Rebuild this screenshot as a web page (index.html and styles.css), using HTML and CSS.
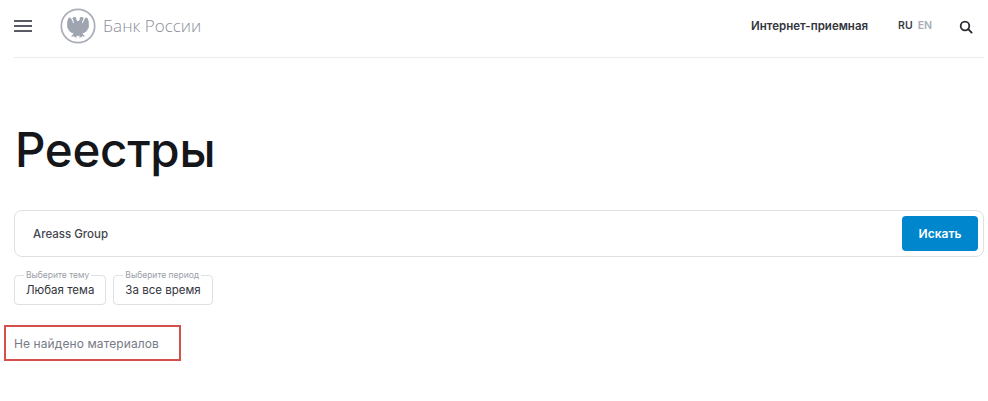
FILE: index.html
```html
<!DOCTYPE html>
<html lang="ru">
<head>
<meta charset="utf-8">
<title>Реестры</title>
<link rel="stylesheet" href="styles.css">
</head>
<body>
<div class="page">
  <header class="header">
    <div class="brand">
      <div class="burger"><span></span><span></span><span></span></div>
      <svg class="emblem" viewBox="0 0 36 36" width="36" height="36" aria-hidden="true">
        <circle cx="18" cy="18" r="16.7" fill="none" stroke="#a9aeb9" stroke-width="1.7"/>
        <g fill="#9fa4b1">
          <path d="M17.4 12.5l-1.2-.8.2-1.6-1.2-1.2-1.6.1-.9 1.2-1.3.5 1.5.3.3 1.6.8 1.6-.7 1.3-1.2-3.2-1.6-2.6-1.3-.2-.9 1-1 2.7-.2 3.4.2 3.7 1 .3.1 1.6 1 .2.5 1.5 1 .1.8 1.1 1.3-.1.4-1-.4 2.2-1.9 2.4 1.2.2 1.4-1 .3 1.5 1.3-.5.9 1.7.5-2.9-.2-3-.3-1.4v-10z"/>
          <path d="M18.6 12.5l1.2-.8-.2-1.6 1.2-1.2 1.6.1.9 1.2 1.3.5-1.5.3-.3 1.6-.8 1.6.7 1.3 1.2-3.2 1.6-2.6 1.3-.2.9 1 1 2.7.2 3.4-.2 3.7-1 .3-.1 1.6-1 .2-.5 1.5-1 .1-.8 1.1-1.3-.1-.4-1 .4 2.2 1.9 2.4-1.2.2-1.4-1-.3 1.5-1.3-.5-.9 1.7-.5-2.9.2-3 .3-1.4v-10z"/>
          <path d="M14.2 13h7.6l.6 5.5-1.2 6-2.1 3.6h-2.2l-2.1-3.6-1.2-6z"/>
        </g>
      </svg>
      <span class="bank-name">Банк России</span>
    </div>
    <nav class="tools">
      <span class="reception">Интернет-приемная</span>
      <span class="langs"><b class="lang-on">RU</b><span class="lang-off">EN</span></span>
      <svg class="search-icon" viewBox="0 0 14 14" width="14" height="14" aria-hidden="true">
        <circle cx="6" cy="6" r="4.3" fill="none" stroke="#2a2c33" stroke-width="1.8"/>
        <path d="M9.2 9.2L12.6 12.6" stroke="#2a2c33" stroke-width="1.9" stroke-linecap="round"/>
      </svg>
    </nav>
  </header>

  <h1 class="title">Реестры</h1>

  <form class="search">
    <span class="query">Areass Group</span>
    <span class="submit">Искать</span>
  </form>

  <div class="filters">
    <fieldset class="filter">
      <legend>Выберите тему</legend>
      <span>Любая тема</span>
    </fieldset>
    <fieldset class="filter">
      <legend>Выберите период</legend>
      <span>За все время</span>
    </fieldset>
  </div>

  <div class="empty">Не найдено материалов</div>
</div>
</body>
</html>
```

FILE: styles.css
```css
* { box-sizing: border-box; }
html, body { margin: 0; padding: 0; background: #fff; }
body { font-family: Inter, "Noto Sans", sans-serif; color: #15171c; overflow: hidden; }
.page { width: 988px; height: 401px; padding: 0 4px 0 14px; }
.header {
  height: 58px;
  display: flex;
  align-items: center;
  justify-content: space-between;
  border-bottom: 1px solid #ececee;
  padding-bottom: 5px;
}
.brand { display: flex; align-items: center; margin-top: -1px; }
.burger { width: 18px; display: flex; flex-direction: column; gap: 3px; margin-right: 28px; }
.burger span { display: block; height: 2px; background: #585b63; }
.emblem { margin-right: 7px; }
.bank-name { font-family: "Open Sans", sans-serif; font-weight: 300; font-size: 17px; color: #8a8f9b; }
.tools { display: flex; align-items: center; padding-right: 11px; }
.reception { font-size: 11.5px; font-weight: 600; color: #33353d; margin-right: 30px; margin-top: -1px; }
.langs { display: flex; gap: 5px; font-size: 10.5px; font-weight: 600; margin-right: 27px; margin-top: -2px; }
.lang-on { font-weight: 600; color: #3a3c44; }
.lang-off { color: #a9adb6; }
.search-icon { display: block; margin-top: 2px; }
.title { margin: 61px 0 0 1px; font-size: 47.5px; line-height: 62px; font-weight: 500; letter-spacing: -0.3px; color: #14161a; }
.search {
  margin-top: 29px;
  height: 47px;
  display: flex;
  align-items: center;
  justify-content: space-between;
  border: 1px solid #dfe0e3;
  border-radius: 8px;
  padding: 0 5px 0 18px;
}
.query { font-size: 11.5px; font-weight: 500; color: #43464e; }
.submit {
  width: 76px;
  height: 35px;
  display: flex;
  align-items: center;
  justify-content: center;
  background: #0086cc;
  border-radius: 4px;
  color: #fff;
  font-size: 12px;
  font-weight: 600;
}
.filters { display: flex; gap: 7px; margin-top: 13px; }
.filter {
  margin: 0;
  padding: 2px 11px 0 11px;
  height: 35px;
  border: 1px solid #dfe0e3;
  border-radius: 4px;
  font-size: 11.5px;
  font-weight: 400;
  color: #33353d;
  white-space: nowrap;
}
.filter legend { padding: 0 2px; margin-left: -2px; font-size: 8.5px; color: #9a9ea8; line-height: 11px; }
.empty {
  margin: 20px 0 0 -10px;
  width: 177px;
  height: 36px;
  display: flex;
  align-items: center;
  padding-left: 8px;
  border: 2px solid #d5504a;
  font-size: 12px;
  letter-spacing: 0.1px;
  color: #767b87;
}
```
